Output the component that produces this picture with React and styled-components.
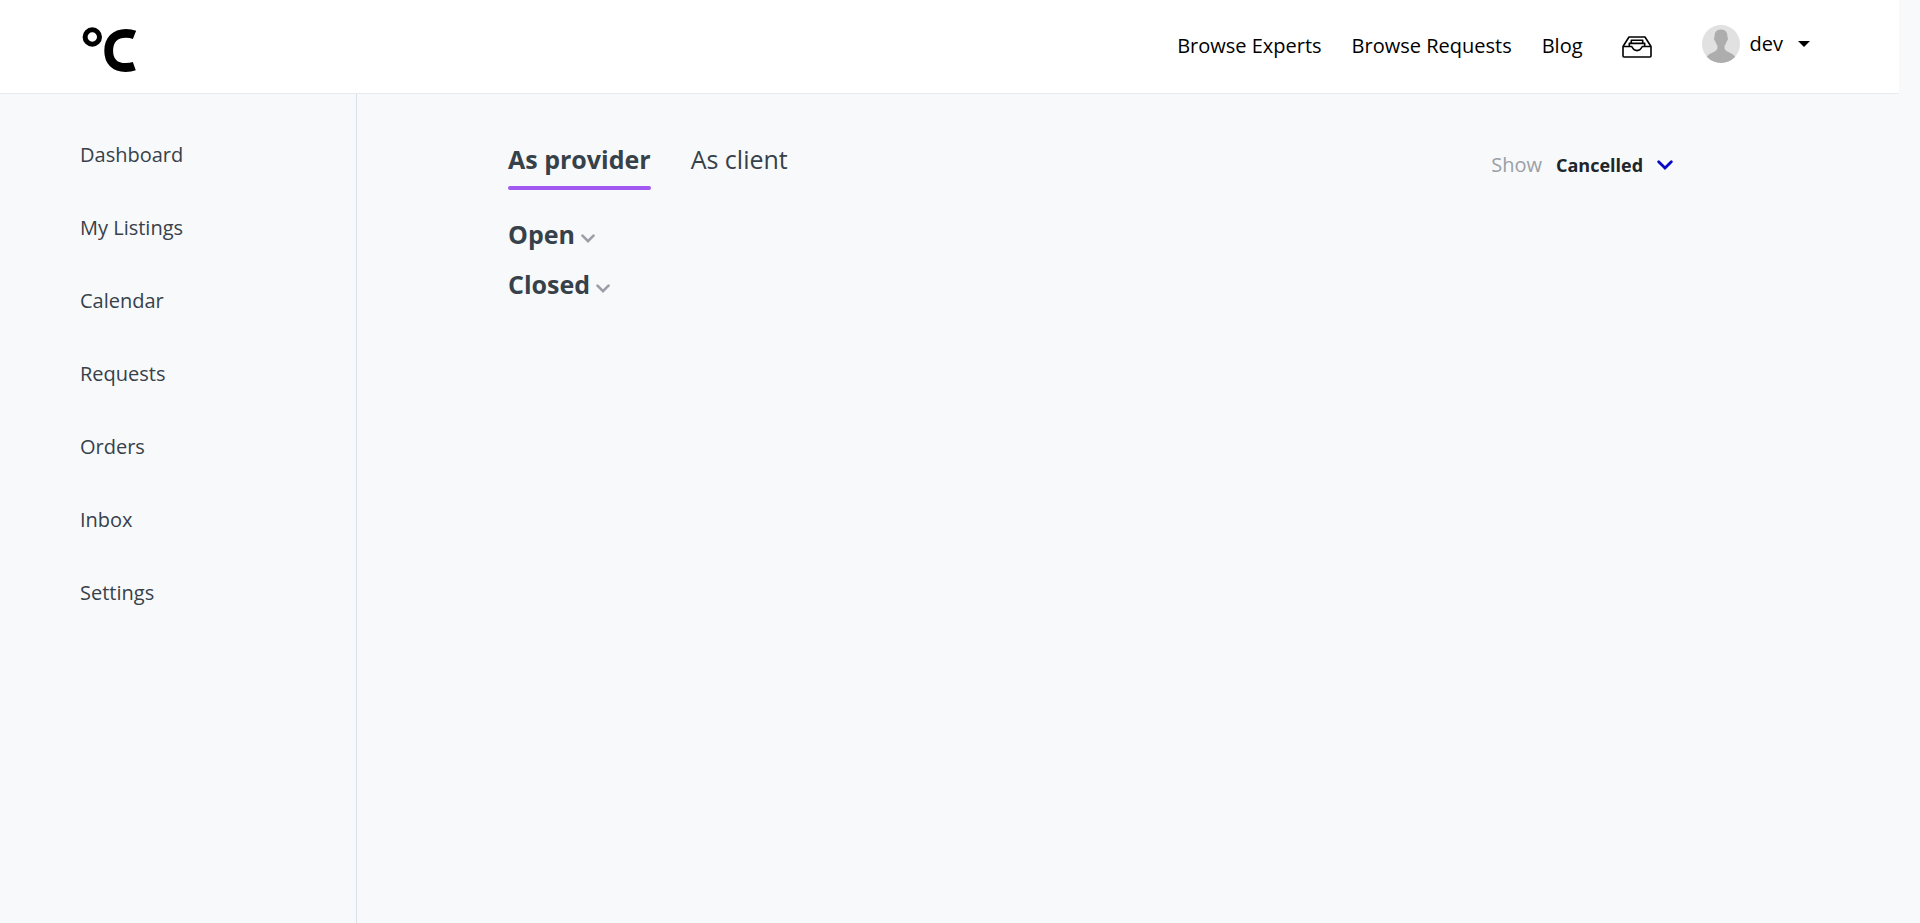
import React from "react";
import styled, { createGlobalStyle } from "styled-components";

const GlobalStyle = createGlobalStyle`
  * { box-sizing: border-box; }
  body {
    margin: 0;
    background: #f8f9fb;
    color: #36414a;
    font-family: "Open Sans", "Noto Sans", sans-serif;
    font-size: 20px;
    line-height: 28px;
  }
  a { color: inherit; text-decoration: none; }
  button, select { font: inherit; color: inherit; background: none; border: 0; padding: 0; cursor: pointer; }
  h2 { margin: 0; font-size: inherit; }
  svg { display: block; flex: none; }
`;

const Page = styled.div`
  display: flex;
  flex-direction: column;
  min-height: 100vh;
  padding-right: 21px;
`;

const Header = styled.header`
  display: flex;
  align-items: center;
  justify-content: space-between;
  height: 94px;
  padding: 0 89px 2px 80px;
  background: #fff;
  border-bottom: 1px solid #e9eaec;
  color: #000;
`;

const HeaderNav = styled.nav`
  display: flex;
  align-items: center;
  gap: 30px;
`;

const InboxLink = styled.a`
  margin: 2px 20px 0 9px;
`;

const UserMenu = styled.button`
  display: flex;
  align-items: center;
  gap: 10px;
  height: 40px;
  padding-bottom: 4px;
`;

const Caret = styled.span`
  margin-left: 5px;
  border: 6px solid transparent;
  border-top-color: #000;
  border-bottom: 0;
`;

const Body = styled.div`
  display: flex;
  flex: 1;
`;

const Sidebar = styled.nav`
  width: 357px;
  flex: none;
  padding: 47px 0 0 80px;
  border-right: 1px solid #d8e0ea;
`;

const SideList = styled.ul`
  display: grid;
  gap: 45px;
  margin: 0;
  padding: 0;
  list-style: none;
`;

const Main = styled.main`
  flex: 1;
  padding: 48px 226px 40px 151px;
`;

const Toolbar = styled.div`
  display: flex;
  align-items: flex-start;
  justify-content: space-between;
`;

const Tabs = styled.div`
  display: flex;
  gap: 40px;
`;

const Tab = styled.button`
  height: 48px;
  padding-bottom: 14px;
  font-size: 25px;
  font-weight: ${(p) => (p.$active ? 700 : 400)};
  position: relative;

  &::after {
    content: "";
    position: absolute;
    inset: auto 0 0;
    height: 4px;
    border-radius: 2px;
    background: ${(p) => (p.$active ? "#a259f2" : "transparent")};
  }
`;

const Filter = styled.label`
  display: flex;
  align-items: center;
  gap: 14px;
  padding-top: 9px;
  color: #9a9fa5;
`;

const SelectWrap = styled.span`
  display: flex;
  align-items: center;
  gap: 13px;
`;

const Select = styled.select`
  appearance: none;
  outline: 0;
  color: #202529;
  font-size: 18px;
  font-weight: 700;
`;

const Sections = styled.div`
  display: grid;
  gap: 16px;
  margin-top: 27px;
`;

const SectionToggle = styled.button`
  display: flex;
  align-items: center;
  gap: 6px;
  font-size: 25px;
  font-weight: 700;
  line-height: 34px;

  svg { margin-top: 8px; }
`;

function Chevron({ color, width, height, stroke }) {
  return (
    <svg width={width} height={height} viewBox="0 0 16 10" fill="none" aria-hidden="true">
      <path d="M1.7 1.7L8 8L14.3 1.7" stroke={color} strokeWidth={stroke} strokeLinecap="round" />
    </svg>
  );
}

function LogoMark() {
  return (
    <svg width="58" height="52" viewBox="0 -6 58 52" fill="none" stroke="#000" aria-hidden="true">
      <circle cx="12.3" cy="11" r="7.2" strokeWidth="5" />
      <path d="M54.5 8.8C51.5 7.6 48.8 7.3 46 7.3C35 7.3 28.7 14.4 28.7 24.7C28.7 35.4 34.8 41.5 45.5 41.5C48.8 41.5 51.5 41.2 54.3 40.2" strokeWidth="8.8" />
    </svg>
  );
}

function TrayIcon() {
  return (
    <svg width="30" height="22" viewBox="0 0 30 22" fill="none" stroke="#000" strokeWidth="1.6" strokeLinejoin="round" aria-hidden="true">
      <path d="M1 10.5L7 1H23L29 10.5V20Q29 21 28 21H2Q1 21 1 20Z" />
      <path d="M1 10.5H9.5C10.5 10.5 10.5 14.6 15 14.6S19.5 10.5 20.5 10.5H29" />
      <path d="M7.3 10.5V7.4H22.7V10.5M9.3 7V4.2H20.7V7" />
    </svg>
  );
}

function Avatar() {
  return (
    <svg width="38" height="38" viewBox="0 0 38 38" aria-hidden="true">
      <clipPath id="avatar-circle"><circle cx="19" cy="19" r="19" /></clipPath>
      <g clipPath="url(#avatar-circle)">
        <rect width="38" height="38" fill="#e1e1e1" />
        <path fill="#adadad" d="M19 4.5C23.6 4.5 25.7 7.6 25.4 12C26.6 12.4 25.7 16 24.7 16.3C24.3 18.2 23.4 19.6 22.6 20.5V23.5C23.2 27 29.5 27 33 31.5V38H5V31.5C8.5 27 14.8 27 15.4 23.5V20.5C14.6 19.6 13.7 18.2 13.3 16.3C12.3 16 11.4 12.4 12.6 12C12.3 7.6 14.4 4.5 19 4.5Z" />
      </g>
    </svg>
  );
}

const sideLinks = ["Dashboard", "My Listings", "Calendar", "Requests", "Orders", "Inbox", "Settings"];

export default function App() {
  return (
    <>
      <GlobalStyle />
      <Page>
        <Header>
          <a href="#home" aria-label="Home"><LogoMark /></a>
          <HeaderNav>
            <a href="#experts">Browse Experts</a>
            <a href="#requests">Browse Requests</a>
            <a href="#blog">Blog</a>
            <InboxLink href="#inbox" aria-label="Inbox"><TrayIcon /></InboxLink>
            <UserMenu type="button">
              <Avatar />
              dev
              <Caret />
            </UserMenu>
          </HeaderNav>
        </Header>
        <Body>
          <Sidebar>
            <SideList>
              {sideLinks.map((name) => (
                <li key={name}><a href="#side">{name}</a></li>
              ))}
            </SideList>
          </Sidebar>
          <Main>
            <Toolbar>
              <Tabs>
                <Tab type="button" $active>As provider</Tab>
                <Tab type="button">As client</Tab>
              </Tabs>
              <Filter>
                Show
                <SelectWrap>
                  <Select defaultValue="Cancelled">
                    <option>Cancelled</option>
                  </Select>
                  <Chevron color="#0808c8" width={16} height={10} stroke={2.8} />
                </SelectWrap>
              </Filter>
            </Toolbar>
            <Sections>
              {["Open", "Closed"].map((name) => (
                <h2 key={name}>
                  <SectionToggle type="button">
                    {name}
                    <Chevron color="#9a9fa5" width={14} height={9} stroke={3} />
                  </SectionToggle>
                </h2>
              ))}
            </Sections>
          </Main>
        </Body>
      </Page>
    </>
  );
}
